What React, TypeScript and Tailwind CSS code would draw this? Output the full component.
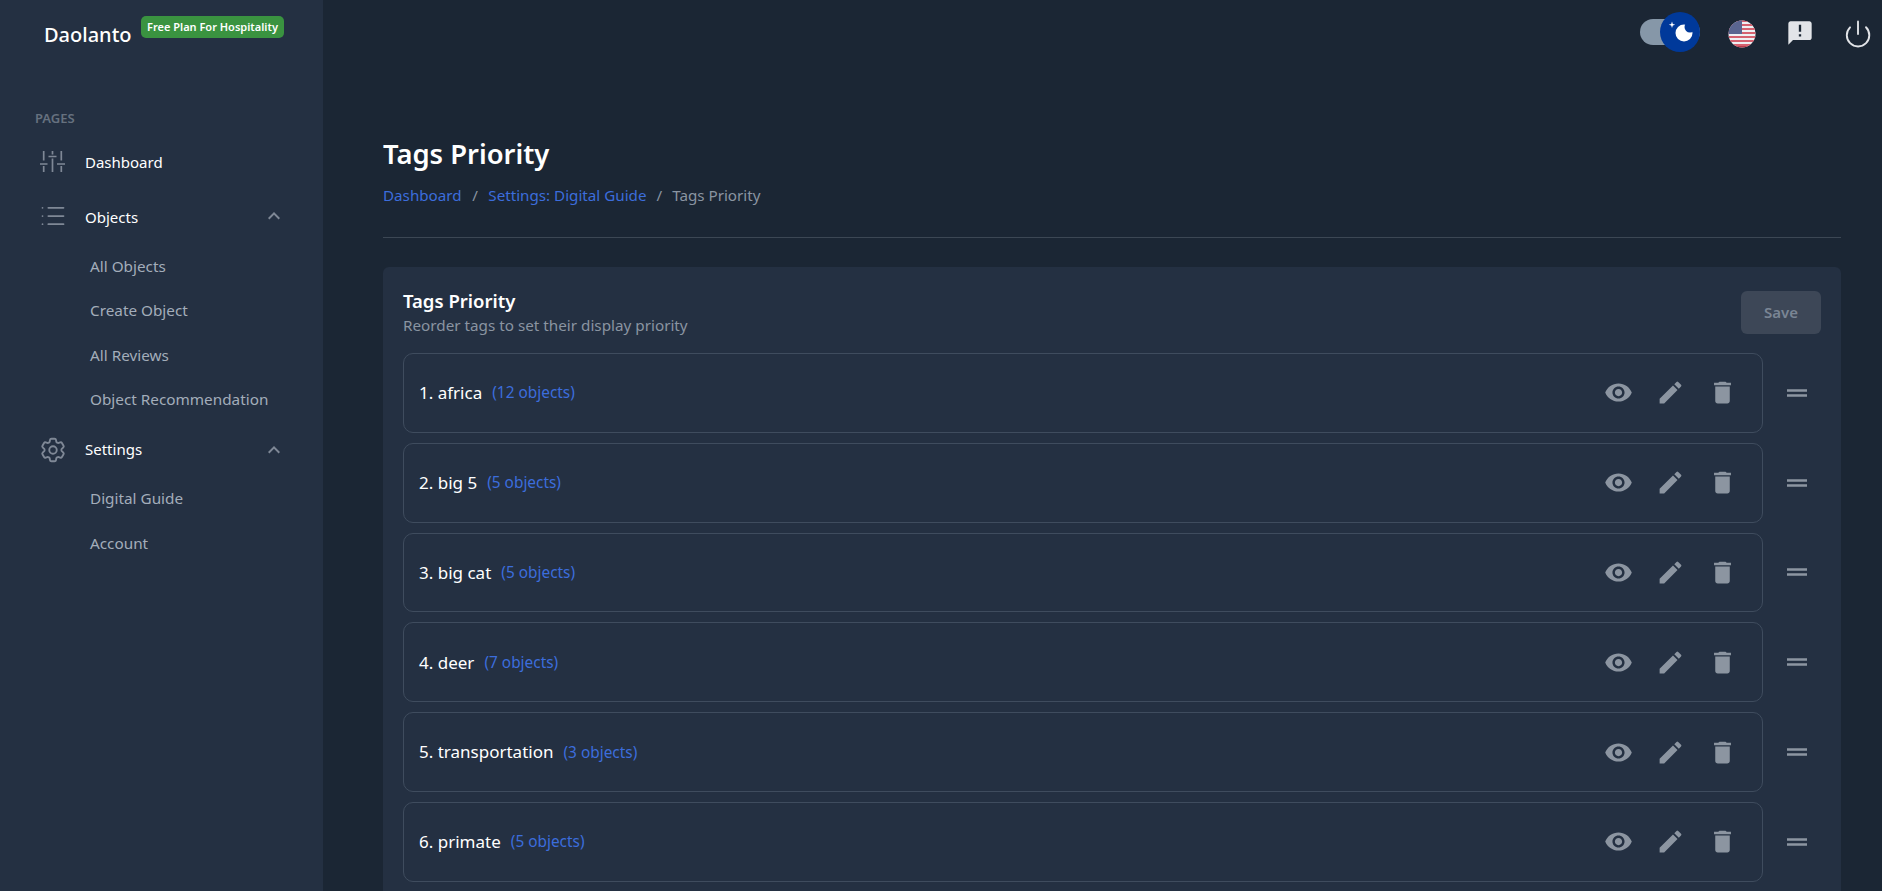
import { List, Power } from 'lucide-react'
import { HiOutlineCog6Tooth } from 'react-icons/hi2'
import { MdAnnouncement, MdDelete, MdDragHandle, MdEdit, MdExpandLess, MdVisibility } from 'react-icons/md'

const objectLinks = ['All Objects', 'Create Object', 'All Reviews', 'Object Recommendation']
const settingsLinks = ['Digital Guide', 'Account']

const tags = [
  { name: 'africa', count: 12 },
  { name: 'big 5', count: 5 },
  { name: 'big cat', count: 5 },
  { name: 'deer', count: 7 },
  { name: 'transportation', count: 3 },
  { name: 'primate', count: 5 },
]

function SubLinks({ items }: { items: string[] }) {
  return (
    <div className="flex flex-col">
      {items.map((item) => (
        <a key={item} className="pl-[90px] h-[44.4px] flex items-center text-[15.3px] text-[#a3adba]">
          {item}
        </a>
      ))}
    </div>
  )
}

function SlidersIcon() {
  return (
    <svg width="25" height="21" viewBox="0 0 25 21" fill="none" stroke="#7f8896" strokeWidth="1.7">
      <path d="M3.7 0v9.5M3.7 15v6M12.5 0v3.5M12.5 7.5V21M21.3 0v9.5M21.3 15v6" />
      <path d="M0 13h7.5M8.5 5.5h8M17 13h8" />
    </svg>
  )
}

function Sidebar() {
  return (
    <aside className="w-[323px] shrink-0 h-full bg-[#243042]">
      <div className="relative h-[106px]">
        <span className="absolute left-[44px] top-[20px] text-[20px] font-medium text-white">Daolanto</span>
        <span className="absolute left-[141px] top-[16px] h-[22px] w-[143px] rounded-[5px] bg-[#3a9340] flex items-center justify-center text-[11px] font-semibold text-white">
          Free Plan For Hospitality
        </span>
      </div>
      <div className="pl-[35px] h-[26px] flex items-center text-[13px] font-semibold text-[#66717f]">PAGES</div>
      <a className="flex items-center h-[54px] mt-[3px] pl-[37.5px]">
        <span className="w-[30px] -mt-[2px] flex justify-center">
          <SlidersIcon />
        </span>
        <span className="ml-[17.5px] text-[15px] text-white">Dashboard</span>
      </a>
      <a className="flex items-center h-[52px] mt-[2px] pl-[37.5px] pr-[37px]">
        <span className="w-[30px] -mt-[2px] flex justify-center">
          <List size={28} strokeWidth={1.5} className="text-[#7f8896]" />
        </span>
        <span className="ml-[17.5px] text-[15px] text-white">Objects</span>
        <MdExpandLess size={24} className="ml-auto -mt-[3px] text-[#7f8896]" />
      </a>
      <div className="mt-[1px]">
        <SubLinks items={objectLinks} />
      </div>
      <a className="flex items-center h-[54px] mt-[1px] pl-[37.5px] pr-[37px]">
        <span className="w-[30px] flex justify-center">
          <HiOutlineCog6Tooth size={30} className="text-[#7f8896]" />
        </span>
        <span className="ml-[17.5px] text-[15px] text-white">Settings</span>
        <MdExpandLess size={24} className="ml-auto text-[#7f8896]" />
      </a>
      <SubLinks items={settingsLinks} />
    </aside>
  )
}

function FlagIcon() {
  return (
    <svg width="28" height="28" viewBox="0 0 28 28">
      <defs>
        <clipPath id="flag-circle">
          <circle cx="14" cy="14" r="13.5" />
        </clipPath>
      </defs>
      <g clipPath="url(#flag-circle)">
        <rect width="28" height="28" fill="#eef0f3" />
        {[0, 4, 8, 12, 16, 20, 24].map((y) => (
          <rect key={y} x="0" y={y} width="28" height="2" fill="#d5616f" />
        ))}
        <rect x="0" y="0" width="14" height="14" fill="#5a6590" />
        <rect x="0" y="26" width="28" height="2" fill="#b83a4b" />
      </g>
    </svg>
  )
}

function ThemeToggle() {
  return (
    <div className="relative w-[60px] h-[40px]">
      <div className="absolute left-0 top-[7px] w-[60px] h-[26px] rounded-full bg-[#8697a8]" />
      <div className="absolute left-[20px] top-0 w-[40px] h-[40px] rounded-full bg-[#00399a]">
        <svg width="40" height="40" viewBox="0 0 40 40" fill="white">
          <defs>
            <mask id="moon-bite">
              <rect width="40" height="40" fill="white" />
              <circle cx="30" cy="15" r="5.5" fill="black" />
            </mask>
          </defs>
          <circle cx="24" cy="21" r="8.5" mask="url(#moon-bite)" />
          <path d="M12 9.5l.8 2.4 2.4.8-2.4.8-.8 2.4-.8-2.4-2.4-.8 2.4-.8Z" />
        </svg>
      </div>
    </div>
  )
}

function TopBar() {
  return (
    <header className="h-[96px] shrink-0 flex items-start justify-end pt-[12px] pr-[9px]">
      <ThemeToggle />
      <div className="ml-[28px] mt-[8px]">
        <FlagIcon />
      </div>
      <MdAnnouncement size={28} className="ml-[30px] mt-[7px] text-[#e2e4e8]" />
      <Power size={30} strokeWidth={1.5} className="ml-[29.5px] mt-[7px] text-[#e2e4e8]" />
    </header>
  )
}

function TagRow({ index, name, count }: { index: number; name: string; count: number }) {
  return (
    <div className="flex items-center">
      <div className="w-[1360px] h-[79.8px] rounded-[10px] border border-[#3f4c5e] flex items-center pl-[15px] pr-[25px]">
        <span className="text-[17px] text-white">
          {index}. {name}
        </span>
        <span className="ml-[10px] text-[15.4px] text-[#3c6ddc]">({count} objects)</span>
        <div className="ml-auto flex items-center gap-[23px] text-[#8c95a1]">
          <MdVisibility size={29} />
          <MdEdit size={29} />
          <MdDelete size={29} />
        </div>
      </div>
      <MdDragHandle size={30} className="ml-[19px] text-[#8c95a1]" />
    </div>
  )
}

export default function App() {
  return (
    <div className="flex w-full h-[891px] overflow-hidden bg-[#1b2634] font-['Noto_Sans','Open_Sans',sans-serif]">
      <Sidebar />
      <div className="flex-1 flex flex-col min-w-0">
        <TopBar />
        <main className="pl-[60px] pr-[41px]">
          <div className="pb-[31px] border-b border-[#3c4754]">
            <h1 className="text-[27.4px] leading-[40px] font-semibold text-white mt-[38px]">Tags Priority</h1>
            <nav className="mt-[10px] flex items-center text-[15.2px] leading-[22px]">
              <a className="text-[#3c6ddc]">Dashboard</a>
              <span className="mx-[10.5px] text-[#8a94a1]">/</span>
              <a className="text-[#3c6ddc]">Settings: Digital Guide</a>
              <span className="mx-[10px] text-[#8a94a1]">/</span>
              <span className="text-[#8a94a1]">Tags Priority</span>
            </nav>
          </div>
          <section className="mt-[29px] rounded-[6px] bg-[#243042] px-[20px] pt-[21px] pb-[60px]">
            <div className="flex items-start justify-between">
              <div>
                <h2 className="text-[18.5px] leading-[26px] font-semibold text-white">Tags Priority</h2>
                <p className="text-[15.25px] leading-[20px] mt-[1px] text-[#8a94a1]">Reorder tags to set their display priority</p>
              </div>
              <button className="w-[80px] h-[43px] mt-[3px] rounded-[6px] bg-[#3d4757] text-[15px] font-semibold text-[#7a8594]">
                Save
              </button>
            </div>
            <div className="mt-[18px] flex flex-col gap-[10px]">
              {tags.map((tag, i) => (
                <TagRow key={tag.name} index={i + 1} name={tag.name} count={tag.count} />
              ))}
            </div>
          </section>
        </main>
      </div>
    </div>
  )
}
